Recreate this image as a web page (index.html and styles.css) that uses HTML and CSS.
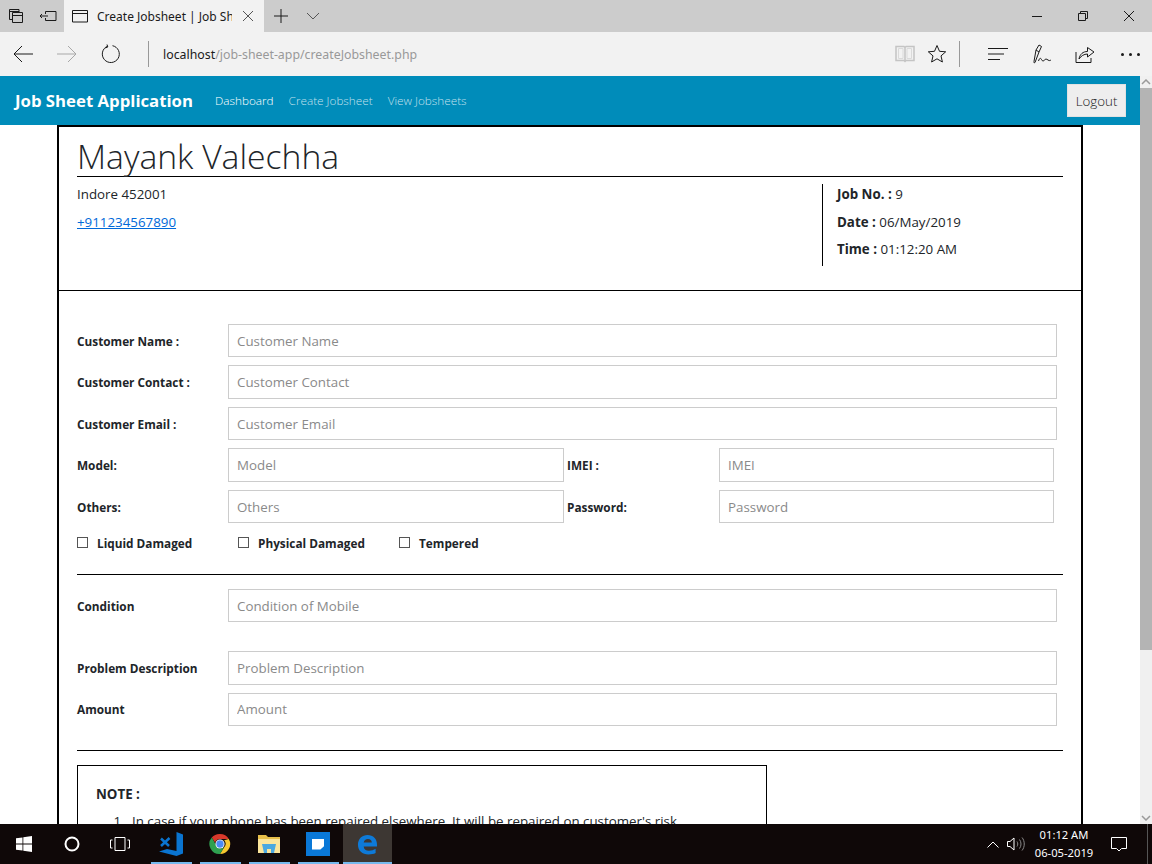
FILE: index.html
```html
<!DOCTYPE html>
<html lang="en">
<head>
    <meta charset="UTF-8">
    <meta name="viewport" content="width=device-width, initial-scale=1.0">
    <title>Create Jobsheet | Job Sheet Application</title>
    <link rel="stylesheet" href="styles.css">
</head>
<body>
    <div class="tabbar">
        <div class="tab-tools">
            <svg class="icon" width="32" height="32" viewBox="0 0 32 32"><path d="M9.5 9.5h9.500v3M9.500 9.500v10h3M12.500 12.500h10v10h-10zM12.500 15.500h10M9.500 11.500h9.500" /></svg>
            <svg class="icon" width="32" height="32" viewBox="0 0 32 32"><path d="M13.500 11.500h10.500v9h-10.500v-2.500M13.500 14v-2.500M8 16h8M10 14l-2 2 2 2" /></svg>
        </div>
        <div class="tab">
            <svg class="icon" width="16" height="14" viewBox="0 0 16 14"><path d="M.5 1.500h15v11.500h-15zM.5 4.500h15" /></svg>
            <span class="tab-title">Create Jobsheet | Job Sheet Application</span>
            <svg class="icon thin" width="12" height="12" viewBox="0 0 12 12"><path d="M1 1l10 10M11 1L1 11" /></svg>
        </div>
        <div class="tab-new">
            <svg class="icon" width="14" height="14" viewBox="0 0 14 14"><path d="M7 0v14M0 7h14" /></svg>
            <svg class="icon thin" width="14" height="8" viewBox="0 0 14 8"><path d="M1 1l6 6 6-6" /></svg>
        </div>
        <div class="window-btns">
            <svg class="icon" width="12" height="12" viewBox="0 0 12 12"><path d="M1 6.500h10" /></svg>
            <svg class="icon" width="12" height="12" viewBox="0 0 12 12"><path d="M1.500 3.500h7v7h-7zM3.500 3.500v-2h7v7h-2" /></svg>
            <svg class="icon" width="12" height="12" viewBox="0 0 12 12"><path d="M1 1l10 10M11 1L1 11" /></svg>
        </div>
    </div>

    <div class="toolbar">
        <div class="nav-btns">
            <svg class="icon" width="20" height="18" viewBox="0 0 20 18"><path d="M20 9H1M9 1L1 9l8 8" /></svg>
            <svg class="icon faded" width="20" height="18" viewBox="0 0 20 18"><path d="M0 9h19M11 1l8 8-8 8" /></svg>
            <svg class="icon" width="20" height="20" viewBox="0 0 20 20"><path d="M6.500 2.200A8.500 8.500 0 1 0 11.500 1.700M6 .5l.8 2.500-2.500 1" /></svg>
        </div>
        <div class="divider"></div>
        <div class="address"><span>localhost</span>/job-sheet-app/createJobsheet.php</div>
        <div class="toolbar-right">
            <svg class="icon book" width="20" height="18" viewBox="0 0 20 18"><path d="M1 1.500h8l1 1 1-1h8v14h-8l-1 1-1-1H1zM10 2.500v13" /><path class="book-in" d="M3.500 3.500h4.500v10H3.500zM12 3.500h4.500v10H12z" /></svg>
            <svg class="icon star" width="20" height="20" viewBox="0 0 20 20"><path d="M10 1.500l2.500 5.800 6.200.5-4.700 4.100 1.400 6.100-5.400-3.200-5.400 3.200 1.400-6.100L1.300 7.800l6.200-.5z" /></svg>
            <div class="divider tool-divider"></div>
            <svg class="icon hub" width="20" height="14" viewBox="0 0 20 14"><path d="M0 1.500h20M0 7h16M0 12.500h12" /></svg>
            <svg class="icon pen" width="20" height="20" viewBox="0 0 20 20"><path d="M2 18.500c-1 .5-1.500 0-1-1L3 6l3-5 2.500 1.500L6 8zM3 6l3 2M5.500 17c1-3 2-3.500 3-1.500s2 2 3 .5 2-1 3.500 0 2 .5 3 0" /></svg>
            <svg class="icon share" width="20" height="20" viewBox="0 0 20 20"><path d="M1 8v10.500h15V14M4 15c1-5 4-7.500 8.500-7.500V3.500L19 8l-6.500 5V10C9 10 6 12 4 15z" /></svg>
            <div class="dots"><i></i><i></i><i></i></div>
        </div>
    </div>

    <div class="viewport">
        <div class="page">
            <nav class="navbar">
                <a class="brand">Job Sheet Application</a>
                <a class="nav-link active">Dashboard</a>
                <a class="nav-link">Create Jobsheet</a>
                <a class="nav-link">View Jobsheets</a>
                <button class="logout">Logout</button>
            </nav>

            <div class="sheet">
                <header class="sheet-head">
                    <h1>Mayank Valechha</h1>
                    <div class="head-cols">
                        <div class="head-left">
                            <p>Indore 452001</p>
                            <p><a href="#">+911234567890</a></p>
                        </div>
                        <div class="head-right">
                            <p><b>Job No. :</b> 9</p>
                            <p><b>Date :</b> 06/May/2019</p>
                            <p><b>Time :</b> 01:12:20 AM</p>
                        </div>
                    </div>
                </header>

                <form class="sheet-form">
                    <div class="form-row">
                        <label>Customer Name :</label>
                        <input type="text" placeholder="Customer Name">
                    </div>
                    <div class="form-row">
                        <label>Customer Contact :</label>
                        <input type="text" placeholder="Customer Contact">
                    </div>
                    <div class="form-row">
                        <label>Customer Email :</label>
                        <input type="text" placeholder="Customer Email">
                    </div>
                    <div class="form-row split">
                        <label>Model:</label>
                        <input type="text" placeholder="Model">
                        <label>IMEI :</label>
                        <input type="text" placeholder="IMEI">
                    </div>
                    <div class="form-row split">
                        <label>Others:</label>
                        <input type="text" placeholder="Others">
                        <label>Password:</label>
                        <input type="password" placeholder="Password">
                    </div>
                    <div class="checks">
                        <label><span class="box"></span>Liquid Damaged</label>
                        <label><span class="box"></span>Physical Damaged</label>
                        <label><span class="box"></span>Tempered</label>
                    </div>
                    <hr>
                    <div class="form-row wide-gap">
                        <label>Condition</label>
                        <input type="text" placeholder="Condition of Mobile">
                    </div>
                    <div class="form-row">
                        <label>Problem Description</label>
                        <input type="text" placeholder="Problem Description">
                    </div>
                    <div class="form-row">
                        <label>Amount</label>
                        <input type="text" placeholder="Amount">
                    </div>
                    <hr class="hr-note">
                    <div class="note">
                        <p class="note-title">NOTE :</p>
                        <ol>
                            <li>In case if your phone has been repaired elsewhere, It will be repaired on customer's risk.</li>
                        </ol>
                    </div>
                </form>
            </div>
        </div>
        <div class="scrollbar">
            <div class="scroll-arrow"><svg width="10" height="6" viewBox="0 0 10 6"><path d="M1 5l4-4 4 4" /></svg></div>
            <div class="scroll-thumb"></div>
            <div class="scroll-arrow bottom"><svg width="10" height="6" viewBox="0 0 10 6"><path d="M1 1l4 4 4-4" /></svg></div>
        </div>
    </div>

    <div class="taskbar">
        <div class="task">
            <svg width="16" height="16" viewBox="0 0 16 16"><path fill="#fff" d="M0 2.300l6.500-.9v6.200H0zM7.300 1.300L16 0v7.600H7.300zM0 8.400h6.500v6.200L0 13.700zM7.300 8.400H16V16l-8.700-1.300z" /></svg>
        </div>
        <div class="task">
            <svg width="16" height="16" viewBox="0 0 16 16"><circle cx="8" cy="8" r="6.500" fill="none" stroke="#fff" stroke-width="2" /></svg>
        </div>
        <div class="task task-view">
            <svg width="20" height="14" viewBox="0 0 20 14"><path fill="none" stroke="#fff" d="M5 .5h10v13H5zM2.500 3H.5v8h2M17.500 3h2v8h-2" /></svg>
        </div>
        <div class="task pinned">
            <svg width="24" height="24" viewBox="0 0 24 24">
                <path fill="#0a74d0" d="M17.500 0L24 2.500v19L17.500 24 0 19.500l8-2.500 9.500 2z" />
                <path fill="none" stroke="#0a74d0" stroke-width="2.500" d="M2 6.500l8 7.500M10.500 6L2 14" />
            </svg>
        </div>
        <div class="task pinned">
            <svg width="22" height="22" viewBox="0 0 24 24">
                <path fill="#d8392b" d="M12 1a11 11 0 0 1 9.600 5.500H12a5.500 5.500 0 0 0-5.300 4L3 5a11 11 0 0 1 9-4z" />
                <path fill="#f7c72f" d="M21.600 6.500A11 11 0 0 1 12 23l4.700-7.700A5.500 5.500 0 0 0 16.500 8z" />
                <path fill="#2fa050" d="M3 5l4.700 8a5.500 5.500 0 0 0 9 2.300L12 23A11 11 0 0 1 3 5z" />
                <circle cx="12" cy="12" r="5" fill="#fff" />
                <circle cx="12" cy="12" r="4" fill="#4b8bf4" />
            </svg>
        </div>
        <div class="task pinned">
            <svg width="22" height="18" viewBox="0 0 22 18">
                <path fill="#e8c04a" d="M0 0h8l2 2h12v3H0z" />
                <path fill="#fbe59b" d="M0 4h22v14H0z" />
                <path fill="#4aa8e0" d="M4 9h14l-2 9h-3v-4H9v4H6z" />
            </svg>
        </div>
        <div class="task pinned">
            <div class="sticky"><span></span></div>
        </div>
        <div class="task pinned current">
            <svg width="21" height="21" viewBox="0 0 22 22"><path fill="#0e7ad8" d="M1 11C1 5 5.500 1 11 1c6 0 10 4 10 10.500v1.500H7c.3 3 2.400 4.500 5.500 4.500 2.800 0 5-.8 7-2v4.500c-2 1-4.300 1.500-7.500 1.500C5.500 21.500 1 17.500 1 11zM7 9h8.500c0-2.500-1.500-3.800-4-3.800S7.500 6.500 7 9z" /></svg>
        </div>
        <div class="tray">
            <svg width="12" height="7" viewBox="0 0 12 7"><path d="M.5 6.500L6 1l5.500 5.500" /></svg>
            <svg class="tray-sound" width="18" height="16" viewBox="0 0 18 16"><path stroke="#fff" d="M.5 5.500h2.500l4-3.500v12l-4-3.500H.5z" /><path stroke="#8a8a8a" d="M10 5.500c1 1.500 1 3.500 0 5M12.500 3.500c2 2.500 2 6.500 0 9M15 1.500c3 3.500 3 9.500 0 13" /></svg>
            <div class="clock"><div>01:12 AM</div><div>06-05-2019</div></div>
            <svg class="tray-msg" width="16" height="16" viewBox="0 0 16 16"><path d="M.5 1.500h15v11h-5l-2.500 2.500-2.500-2.500h-5z" /></svg>
            <div class="show-desktop"></div>
        </div>
    </div>
</body>
</html>
```

FILE: styles.css
```css
* {
    box-sizing: border-box;
}
html, body {
    height: 100%;
}
body {
    margin: 0;
    display: flex;
    flex-direction: column;
    overflow: hidden;
    font-family: "Open Sans", sans-serif;
    font-size: 13.33px;
    color: #212529;
    background-color: #fff;
}
.icon {
    fill: none;
    stroke: #1a1a1a;
    stroke-width: 1;
    flex: none;
}
.icon.thin {
    stroke: #555;
}
.icon.faded {
    stroke: #a8a8a8;
}

/* browser chrome */
.tabbar {
    display: flex;
    height: 32px;
    flex: none;
    background-color: #ccc;
}
.tab-tools {
    display: flex;
    width: 64px;
}
.tab {
    display: flex;
    align-items: center;
    width: 200px;
    padding: 0 10px 0 8px;
    background-color: #f2f2f2;
}
.tab-title {
    width: 135px;
    margin: 0 10px 0 9px;
    overflow: hidden;
    white-space: nowrap;
    font-family: "Noto Sans", sans-serif;
    font-size: 12px;
    color: #1a1a1a;
}
.tab-new {
    display: flex;
    align-items: center;
    gap: 18px;
    padding-left: 10px;
}
.window-btns {
    display: flex;
    align-items: center;
    gap: 34px;
    margin-left: auto;
    padding-right: 17px;
}
.toolbar {
    display: flex;
    align-items: center;
    height: 44px;
    flex: none;
    background-color: #f2f2f2;
}
.nav-btns {
    display: flex;
    align-items: center;
    gap: 24px;
    width: 148px;
    padding-left: 13px;
}
.divider {
    width: 1px;
    height: 26px;
    background-color: #999;
    flex: none;
}
.address {
    margin-left: 14px;
    font-family: "Noto Sans", sans-serif;
    font-size: 12.35px;
    color: #999;
}
.address span {
    color: #1a1a1a;
}
.toolbar-right {
    display: flex;
    align-items: center;
    margin-left: auto;
    padding-right: 12px;
}
.icon.book {
    stroke: #c4c4c4;
    stroke-width: 1.5;
}
.book-in {
    stroke-width: 1;
    stroke: #dadada;
}
.icon.star, .tool-divider {
    margin-left: 12px;
}
.icon.hub {
    margin-left: 28px;
}
.icon.pen {
    margin-left: 25px;
}
.icon.share {
    margin-left: 22px;
}
.dots {
    display: flex;
    gap: 5px;
    margin-left: 26px;
}
.dots i {
    width: 3px;
    height: 3px;
    background-color: #1a1a1a;
    border-radius: 50%;
}

/* page */
.viewport {
    display: flex;
    flex: 1;
    min-height: 0;
}
.page {
    flex: 1;
    min-width: 0;
    overflow: hidden;
}
.navbar {
    display: flex;
    align-items: center;
    height: 49px;
    padding: 0 14px 0 15px;
    background-color: #008cba;
}
.brand {
    margin-right: 22px;
    font-size: 16.75px;
    font-weight: 700;
    color: #fff;
}
.nav-link {
    margin-right: 15px;
    margin-bottom: 2px;
    font-size: 11.75px;
    font-weight: 300;
    color: rgba(255, 255, 255, 0.75);
}
.nav-link.active {
    color: #fff;
}
.logout {
    margin-left: auto;
    width: 59px;
    height: 33px;
    padding: 0;
    font-family: "Open Sans", sans-serif;
    font-size: 13.33px;
    font-weight: 300;
    color: #222;
    background-color: #eee;
    border: 1px solid #e2e2e2;
}
.sheet {
    width: 1026px;
    margin: 0 auto;
    border: 2px solid #000;
    border-bottom: 0;
}
.sheet-head {
    height: 164px;
    padding: 0 18px;
    border-bottom: 1px solid #000;
}
.sheet-head h1 {
    margin: 0;
    height: 50px;
    border-bottom: 1px solid #000;
    font-size: 33.7px;
    font-weight: 300;
    line-height: 59px;
}
.sheet-head p {
    margin: 0 0 8px;
    line-height: 19.5px;
}
.head-cols {
    display: flex;
    justify-content: space-between;
    margin-top: 7px;
}
.head-left, .head-right {
    padding-top: 1px;
}
.head-left a {
    color: #0069d9;
}
.head-right {
    width: 241px;
    height: 82px;
    padding-left: 14px;
    border-left: 1px solid #000;
}
.head-right b {
    font-weight: 700;
}
.sheet-form {
    padding: 32.85px 18px 0;
}
.form-row {
    display: grid;
    grid-template-columns: 151px 829px;
    align-items: center;
    margin-bottom: 8px;
}
.form-row.split {
    grid-template-columns: 151px 336px 155px 335px;
}
.form-row.split label:nth-of-type(2) {
    padding-left: 3px;
}
.form-row.wide-gap {
    margin-bottom: 28.75px;
}
.form-row label, .checks label {
    font-size: 11.8px;
    font-weight: 700;
}
.form-row input {
    width: 100%;
    height: 33.5px;
    padding: 0 8px;
    font-family: "Open Sans", sans-serif;
    font-size: 13.33px;
    border: 1px solid #ccc;
    border-radius: 0;
    outline: none;
}
.form-row input::placeholder {
    color: #8a8a8a;
}
.checks {
    display: flex;
    gap: 46px;
    margin-top: 8.65px;
    height: 22px;
    align-items: center;
}
.checks label {
    display: flex;
    align-items: center;
    width: 115px;
    white-space: nowrap;
}
.box {
    width: 11px;
    height: 11px;
    margin-right: 9px;
    flex: none;
    border: 1px solid #555;
    background-color: #fff;
}
.sheet-form hr {
    margin: 20px 0 14px;
    border: 0;
    border-top: 1px solid #000;
}
.sheet-form hr.hr-note {
    margin: 24px 0 14px;
}
.note {
    width: 690px;
    padding: 19px 18px;
    border: 1px solid #000;
}
.note-title {
    margin: 0 0 9px;
    font-weight: 700;
}
.note ol {
    margin: 0;
    padding-left: 32px;
}
.note li {
    padding-left: 4px;
}

/* scrollbar */
.scrollbar {
    display: flex;
    flex-direction: column;
    width: 12px;
    flex: none;
    background-color: #f0f0f0;
}
.scroll-arrow {
    display: flex;
    align-items: center;
    justify-content: center;
    height: 12px;
    flex: none;
}
.scroll-arrow svg {
    fill: none;
    stroke: #9a9a9a;
    stroke-width: 1.5;
}
.scroll-thumb {
    height: 562px;
    background-color: #b4b4b4;
}
.scroll-arrow.bottom {
    margin-top: auto;
}

/* taskbar */
.taskbar {
    display: flex;
    align-items: stretch;
    height: 40px;
    flex: none;
    background-color: #0f0808;
}
.task {
    display: flex;
    align-items: center;
    justify-content: center;
    width: 48px;
    flex: none;
    position: relative;
}
.task-view {
    margin-right: 3px;
}
.task.pinned {
    width: 49px;
    padding-right: 1px;
}
.task.pinned::after {
    content: "";
    position: absolute;
    left: 4px;
    right: 4px;
    bottom: 0;
    height: 2px;
    background-color: #76b9ed;
}
.task.current {
    background-color: #3d3733;
}
.task.current::after {
    left: 0;
    right: 0;
}
.sticky {
    display: flex;
    align-items: center;
    justify-content: center;
    width: 24px;
    height: 24px;
    background-color: #0a78d7;
}
.sticky span {
    width: 12px;
    height: 11px;
    background-color: #fff;
    clip-path: polygon(0 0, 100% 0, 100% 70%, 70% 100%, 0 100%);
}
.tray {
    display: flex;
    align-items: center;
    margin-left: auto;
    color: #fff;
}
.tray svg {
    fill: none;
    stroke: #fff;
    flex: none;
}
.tray-sound {
    margin-left: 8px;
}
.clock {
    width: 78px;
    text-align: center;
    font-family: "Noto Sans", sans-serif;
    font-size: 11.2px;
    line-height: 18px;
}
.tray-msg {
    margin-left: 8px;
}
.show-desktop {
    width: 5px;
    height: 100%;
    margin-left: 20px;
    border-left: 1px solid #555;
}
```
